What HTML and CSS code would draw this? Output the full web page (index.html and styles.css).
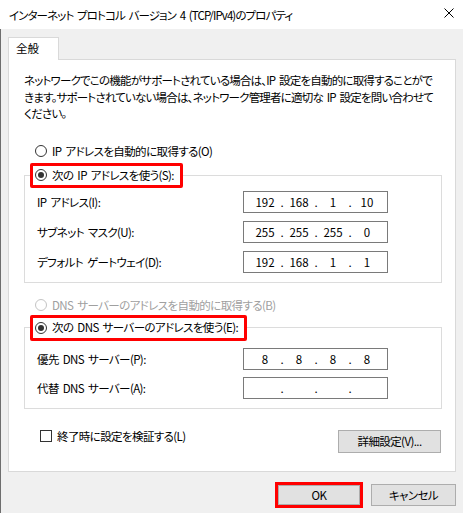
FILE: index.html
```html
<!DOCTYPE html>
<html lang="ja">
<head>
    <meta charset="UTF-8">
    <title>インターネット プロトコル バージョン 4 (TCP/IPv4)のプロパティ</title>
    <link rel="stylesheet" href="styles.css">
</head>
<body>
    <div class="titlebar">
        <span class="title">インターネット プロトコル バージョン 4 (TCP/IPv4)のプロパティ</span>
        <svg class="close" width="10" height="10" viewBox="0 0 10 10">
            <path d="M0.5 0.5 L9.5 9.5 M9.5 0.5 L0.5 9.5" stroke="#000" stroke-width="1" fill="none"/>
        </svg>
    </div>

    <div class="window">
        <div class="tabs">
            <div class="tab">全般</div>
        </div>

        <div class="panel">
            <p class="intro">
                ネットワークでこの機能がサポートされている場合は、IP 設定を自動的に取得することがで<br>
                きます。サポートされていない場合は、ネットワーク管理者に適切な IP 設定を問い合わせて<br>
                ください。
            </p>

            <label class="option"><span class="radio"></span>IP アドレスを自動的に取得する(O)</label>

            <fieldset class="group">
                <legend class="marked"><span class="radio checked"></span>次の IP アドレスを使う(S):</legend>
                <div class="row">
                    <span class="label">IP アドレス(I):</span>
                    <div class="ip"><span>192</span><i>.</i><span>168</span><i>.</i><span>1</span><i>.</i><span>10</span></div>
                </div>
                <div class="row">
                    <span class="label">サブネット マスク(U):</span>
                    <div class="ip"><span>255</span><i>.</i><span>255</span><i>.</i><span>255</span><i>.</i><span>0</span></div>
                </div>
                <div class="row">
                    <span class="label">デフォルト ゲートウェイ(D):</span>
                    <div class="ip"><span>192</span><i>.</i><span>168</span><i>.</i><span>1</span><i>.</i><span>1</span></div>
                </div>
            </fieldset>

            <label class="option disabled"><span class="radio"></span>DNS サーバーのアドレスを自動的に取得する(B)</label>

            <fieldset class="group dns">
                <legend class="marked"><span class="radio checked"></span>次の DNS サーバーのアドレスを使う(E):</legend>
                <div class="row">
                    <span class="label">優先 DNS サーバー(P):</span>
                    <div class="ip"><span>8</span><i>.</i><span>8</span><i>.</i><span>8</span><i>.</i><span>8</span></div>
                </div>
                <div class="row">
                    <span class="label">代替 DNS サーバー(A):</span>
                    <div class="ip"><span></span><i>.</i><span></span><i>.</i><span></span><i>.</i><span></span></div>
                </div>
            </fieldset>

            <div class="bottom">
                <label class="check"><span class="box"></span>終了時に設定を検証する(L)</label>
                <button class="btn advanced">詳細設定(V)...</button>
            </div>
        </div>

        <div class="footer">
            <span class="marked-btn"><button class="btn">OK</button></span>
            <button class="btn">キャンセル</button>
        </div>
    </div>
</body>
</html>
```

FILE: styles.css
```css
body {
    margin: 0;
    background: #f0f0f0;
    font-family: "Noto Sans CJK JP", "Noto Sans", sans-serif;
    font-size: 11.5px;
    letter-spacing: -0.6px;
    word-spacing: 2px;
    color: #000;
    font-feature-settings: "palt";
}
.titlebar {
    height: 29px;
    background: #fff;
    display: flex;
    align-items: center;
    justify-content: space-between;
    padding: 0 9px;
}
.title {
    line-height: 17px;
    padding-top: 1px;
    letter-spacing: -0.9px;
}
.close {
    display: block;
    margin-top: -3px;
}
.window {
    height: 484px;
    box-sizing: border-box;
    border-left: 1px solid #6e6e6e;
    padding: 8px 7px 0 7px;
}
.tabs {
    display: flex;
}
.tab {
    position: relative;
    z-index: 1;
    width: 51px;
    height: 23px;
    box-sizing: border-box;
    background: #fff;
    border: 1px solid #d9d9d9;
    border-bottom: none;
    margin-bottom: -1px;
    padding-left: 7px;
    line-height: 21px;
    letter-spacing: 0;
}
.panel {
    height: 413px;
    box-sizing: border-box;
    background: #fff;
    border: 1px solid #d9d9d9;
    padding: 0 12px 0 15px;
}
.intro {
    margin: 12px 0 0 0;
    line-height: 16.5px;
    white-space: nowrap;
    letter-spacing: -0.8px;
}
.option {
    display: flex;
    align-items: center;
    padding-left: 11px;
    line-height: 17px;
    margin-top: 21px;
}
.option.disabled {
    color: #a0a0a0;
    margin-top: 14px;
}
.radio {
    width: 12px;
    height: 12px;
    box-sizing: border-box;
    border: 1px solid #333;
    border-radius: 50%;
    background: #fff;
    margin-right: 5px;
    display: flex;
    align-items: center;
    justify-content: center;
    flex: none;
}
.disabled .radio {
    border-color: #c4c4c4;
}
.radio.checked::after {
    content: "";
    width: 6px;
    height: 6px;
    border-radius: 50%;
    background: #333;
}
.group {
    width: 418px;
    box-sizing: border-box;
    margin: 3px 0 0 0;
    border: 1px solid #dcdcdc;
    padding: 3px 0 9px 5px;
}
.group.dns {
    margin-top: 1px;
    padding-top: 0;
    padding-bottom: 9px;
}
.marked {
    display: flex;
    align-items: center;
    height: 25px;
    box-sizing: border-box;
    border: 3px solid #f00;
    border-radius: 2px;
    padding: 0 6px 0 2px;
    line-height: 19px;
}
.dns .marked {
    height: 26px;
}
.row {
    display: flex;
    align-items: center;
    padding-left: 7px;
    margin-top: 8px;
}
.row:first-of-type {
    margin-top: 0;
}
.dns .row {
    margin-top: 7px;
}
.label {
    width: 206px;
    flex: none;
}
.ip {
    width: 145px;
    height: 22px;
    box-sizing: border-box;
    border: 1px solid #7a7a7a;
    display: flex;
    align-items: center;
    padding-left: 8px;
    background: #fff;
    letter-spacing: 0;
}
.ip span {
    width: 26px;
    text-align: center;
}
.ip i {
    font-style: normal;
    width: 8px;
    text-align: center;
}
.bottom {
    width: 418px;
    display: flex;
    justify-content: space-between;
    align-items: flex-start;
    margin-top: 19px;
}
.check {
    display: flex;
    align-items: center;
    padding-left: 16px;
    line-height: 17px;
}
.box {
    width: 12px;
    height: 12px;
    box-sizing: border-box;
    border: 1px solid #333;
    background: #fff;
    margin-right: 5px;
}
.btn {
    font-family: inherit;
    font-size: 11.5px;
    letter-spacing: -0.6px;
    font-feature-settings: "palt";
    color: #000;
    background: #e1e1e1;
    border: 1px solid #adadad;
    padding: 0;
    width: 85px;
    height: 22px;
}
.advanced {
    width: 103px;
    height: 23px;
    margin-top: 2px;
    margin-right: 1px;
}
.footer {
    display: flex;
    justify-content: flex-end;
    align-items: center;
    padding-top: 10px;
}
.marked-btn {
    display: flex;
    border: 3px solid #f00;
    margin-right: 8px;
}
.marked-btn .btn {
    width: 82px;
    height: 20px;
}
```
